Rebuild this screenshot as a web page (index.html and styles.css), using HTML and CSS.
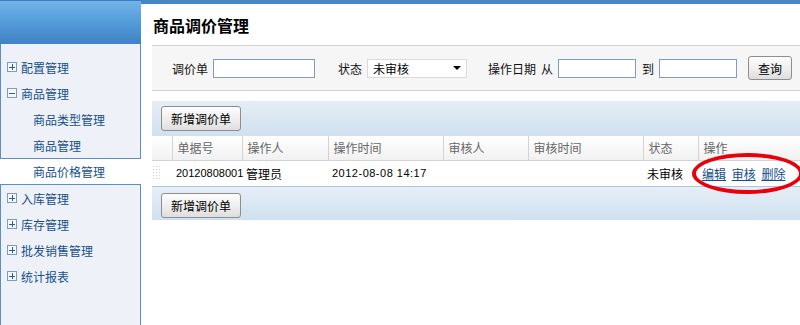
FILE: index.html
```html
<!DOCTYPE html>
<html lang="zh-CN">
<head>
    <meta charset="UTF-8">
    <title>商品调价管理</title>
    <link rel="stylesheet" href="styles.css">
</head>
<body>
    <div class="frame">
        <div class="side">
            <div class="side-head"></div>
            <ul class="menu">
                <li class="menu-item"><span class="toggle plus"></span>配置管理</li>
                <li class="menu-item"><span class="toggle minus"></span>商品管理</li>
                <li class="menu-item sub">商品类型管理</li>
                <li class="menu-item sub">商品管理</li>
                <li class="menu-item sub active">商品价格管理</li>
                <li class="menu-item"><span class="toggle plus"></span>入库管理</li>
                <li class="menu-item"><span class="toggle plus"></span>库存管理</li>
                <li class="menu-item"><span class="toggle plus"></span>批发销售管理</li>
                <li class="menu-item"><span class="toggle plus"></span>统计报表</li>
            </ul>
        </div>

        <div class="main">
            <h1 class="title">商品调价管理</h1>

            <div class="search">
                <label class="field-label">调价单</label>
                <input type="text" class="text-input wide">
                <label class="field-label gap">状态</label>
                <div class="select">
                    <span>未审核</span>
                    <span class="arrow"></span>
                </div>
                <label class="field-label gap">操作日期</label>
                <label class="field-label">从</label>
                <input type="text" class="text-input">
                <label class="field-label">到</label>
                <input type="text" class="text-input">
                <button class="btn query">查询</button>
            </div>

            <div class="grid">
                <div class="toolbar">
                    <button class="btn add">新增调价单</button>
                </div>
                <table class="table">
                    <thead>
                        <tr>
                            <th class="c-handle"></th>
                            <th class="c-no">单据号</th>
                            <th class="c-op">操作人</th>
                            <th class="c-time">操作时间</th>
                            <th class="c-audit">审核人</th>
                            <th class="c-atime">审核时间</th>
                            <th class="c-state">状态</th>
                            <th class="c-act">操作</th>
                        </tr>
                    </thead>
                    <tbody>
                        <tr>
                            <td class="c-handle"><span class="handle"></span></td>
                            <td class="num">20120808001</td>
                            <td>管理员</td>
                            <td class="num wide">2012-08-08 14:17</td>
                            <td></td>
                            <td></td>
                            <td>未审核</td>
                            <td class="actions">
                                <a href="#">编辑</a>
                                <a href="#">审核</a>
                                <a href="#">删除</a>
                            </td>
                        </tr>
                    </tbody>
                </table>
                <div class="toolbar bottom">
                    <button class="btn add">新增调价单</button>
                </div>
                <div class="mark"></div>
            </div>
        </div>
    </div>
</body>
</html>
```

FILE: styles.css
```css
* {
    margin: 0;
    padding: 0;
    box-sizing: border-box;
}

body {
    font-family: "Noto Sans CJK SC", "Liberation Sans", sans-serif;
    font-size: 12px;
    color: #000;
    background: #fff;
}

.frame {
    display: grid;
    grid-template-columns: 141px 1fr;
    min-height: 100vh;
}

/* sidebar */

.side {
    background: #eef2f8;
    border-left: 1px solid #5b8ec2;
    border-right: 1px solid #5b8ec2;
}

.side-head {
    height: 44px;
    margin-left: -1px;
    margin-right: -1px;
    background: linear-gradient(#73b4e8, #58a0dc 40%, #3f82c5);
    border-top: 1px solid #3b7cc0;
}

.menu {
    list-style: none;
    padding-top: 10px;
}

.menu-item {
    display: flex;
    align-items: center;
    height: 26px;
    padding-left: 6px;
    font-size: 12px;
    color: #164f8c;
}

.menu-item.sub {
    padding-left: 32px;
}

.menu-item.active {
    background: #fff;
    border-top: 1px solid #5b8ec2;
    border-bottom: 1px solid #5b8ec2;
    margin-left: -1px;
    margin-right: -1px;
    padding-left: 33px;
    height: 27px;
}

.toggle {
    position: relative;
    width: 10px;
    height: 10px;
    margin-right: 4px;
    border: 1px solid #7d9cbb;
    background: #f5f8fb;
}

.toggle::before,
.toggle::after {
    content: "";
    position: absolute;
    background: #2b5f96;
}

.toggle::before {
    left: 1px;
    top: 4px;
    width: 6px;
    height: 1px;
}

.plus::after {
    left: 4px;
    top: 1px;
    width: 1px;
    height: 6px;
}

/* main */

.main {
    border-top: 4px solid #4685c8;
    padding-left: 11px;
}

.title {
    font-size: 16px;
    font-weight: bold;
    height: 42px;
    line-height: 42px;
    padding-left: 1px;
    border-bottom: 1px solid #d2d2d2;
}

.search {
    display: flex;
    align-items: center;
    height: 45px;
    padding-left: 20px;
    background: #f6f6f6;
    border-bottom: 1px solid #d2d2d2;
}

.field-label {
    margin-right: 5px;
    color: #111;
}

.field-label.gap {
    margin-left: 21px;
}

.text-input {
    width: 78px;
    height: 19px;
    margin-right: 6px;
    border: 1px solid #7f9db9;
    background: #fff;
}

.text-input.wide {
    width: 102px;
    margin-right: 2px;
}

.select {
    display: flex;
    align-items: center;
    justify-content: space-between;
    width: 100px;
    height: 19px;
    padding: 0 5px;
    border: 1px solid #dadada;
    background: #fff;
}

.arrow {
    width: 0;
    height: 0;
    border-left: 4px solid transparent;
    border-right: 4px solid transparent;
    border-top: 4px solid #000;
}

.btn {
    font-family: inherit;
    font-size: 12px;
    color: #000;
    border: 1px solid #8e8e8e;
    border-radius: 3px;
    background: linear-gradient(#fdfdfd, #ececec 60%, #dedede);
    cursor: pointer;
}

.btn.query {
    width: 44px;
    height: 24px;
    margin-left: 5px;
}

.btn.add {
    width: 80px;
    height: 25px;
}

/* grid */

.grid {
    position: relative;
    margin-top: 10px;
}

.toolbar {
    height: 35px;
    padding: 5px 0 0 9px;
    background: linear-gradient(#e6eef6, #cfe0ef);
}

.toolbar.bottom {
    height: 34px;
    padding-top: 6px;
    border-top: 1px solid #a9c4de;
}

.table {
    width: 100%;
    border-collapse: collapse;
    table-layout: fixed;
}

.table th {
    height: 24px;
    text-align: left;
    font-weight: normal;
    color: #666;
    padding-left: 5px;
    background: linear-gradient(#ffffff, #f1f1f1);
    border-right: 1px solid #d3d3d3;
    border-bottom: 1px solid #d3d3d3;
}

.table th:last-child {
    border-right: none;
}

.table td {
    height: 26px;
    padding-left: 4px;
    white-space: nowrap;
}

.table td.num {
    font-family: "Liberation Sans", sans-serif;
    font-size: 11px;
}

.table td.num.wide {
    letter-spacing: 0.5px;
}

.c-handle { width: 20px; }
.c-no { width: 70px; }
.c-op { width: 86px; }
.c-time { width: 115px; }
.c-audit { width: 85px; }
.c-atime { width: 115px; }
.c-state { width: 55px; }

.table td.c-handle {
    padding-left: 0;
}

.handle {
    display: block;
    width: 8px;
    height: 16px;
    background-image: radial-gradient(circle, #d4d4d4 1px, transparent 1px);
    background-size: 3px 3px;
}

.actions a {
    color: #134e8c;
    text-decoration: underline;
    margin-right: 3px;
}

.mark {
    position: absolute;
    left: 540px;
    top: 52px;
    width: 111px;
    height: 41px;
    border: 4px solid #e8000b;
    border-radius: 50%;
}
```
